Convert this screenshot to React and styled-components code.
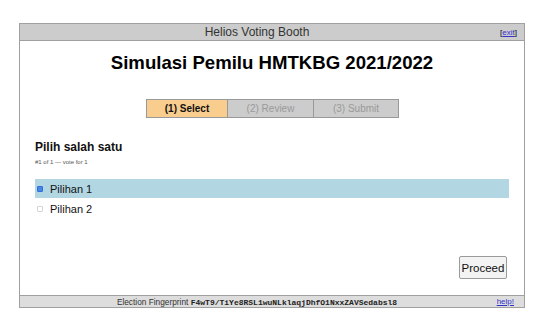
import React from "react";
import styled, { createGlobalStyle } from "styled-components";

const Global = createGlobalStyle`
  html, body { margin: 0; padding: 0; background: #fff; }
  body { font-family: "Liberation Sans", Arial, sans-serif; color: #000; }
`;

const Page = styled.div`
  padding: 23px 0 0 19px;
`;

const Booth = styled.div`
  width: 504px;
  border: 1px solid #a0a0a0;
  display: flex;
  flex-direction: column;
`;

const Bar = styled.div`
  display: flex;
  align-items: center;
  height: ${(p) => p.$h}px;
  background: ${(p) => p.$bg};
  border-${(p) => p.$side}: 1px solid #a0a0a0;
`;

const BarTitle = styled.div`
  flex: 1;
  text-align: center;
  font-size: ${(p) => p.$size}px;
  color: #333;
  white-space: nowrap;
`;

const BarLinkCell = styled.div`
  width: 30px;
  text-align: right;
  padding-right: ${(p) => p.$pr}px;
  box-sizing: border-box;
  font-size: 8px;
  white-space: nowrap;
`;

const Link = styled.a`
  color: #3333cc;
  text-decoration: underline;
`;

const Mono = styled.span`
  font-family: "Liberation Mono", "Courier New", monospace;
  font-weight: bold;
  font-size: 8px;
  color: #222;
`;

const Body = styled.div`
  height: 254px;
  padding: 0 15px;
  display: flex;
  flex-direction: column;
`;

const Title = styled.h1`
  margin: 10px 0 0;
  font-size: 18.6px;
  line-height: 24px;
  font-weight: bold;
  text-align: center;
`;

const Steps = styled.div`
  display: flex;
  align-self: flex-start;
  margin: 24px 0 0 111px;
  border: 1px solid #999;
`;

const Step = styled.div`
  width: ${(p) => p.$w}px;
  height: 17px;
  line-height: 17px;
  text-align: center;
  font-size: 10px;
  background: ${(p) => (p.$active ? "#f9cd8e" : "#cccccc")};
  color: ${(p) => (p.$active ? "#111" : "#9a9a9a")};
  font-weight: ${(p) => (p.$active ? "bold" : "normal")};
  & + & { border-left: 1px solid #999; }
`;

const Question = styled.h3`
  margin: 22px 0 0;
  font-size: 12px;
  line-height: 14px;
  font-weight: bold;
  color: #111;
`;

const Sub = styled.div`
  margin-top: 4px;
  font-size: 6px;
  line-height: 8px;
  color: #555;
`;

const Options = styled.div`
  margin-top: 13px;
  display: flex;
  flex-direction: column;
  gap: 1px;
`;

const Option = styled.label`
  display: flex;
  align-items: center;
  height: 19px;
  background: ${(p) => (p.$checked ? "#b2d7e3" : "transparent")};
  font-size: 11px;
  color: #111;
  padding-left: 2px;
`;

const Box = styled.span`
  width: 4px;
  height: 4px;
  border-radius: 1px;
  border: 1px solid ${(p) => (p.$checked ? "#2f6fd6" : "#d4d4d4")};
  background: ${(p) => (p.$checked ? "#4a86e8" : "#fff")};
  margin-right: 7px;
`;

const Actions = styled.div`
  margin-top: auto;
  margin-bottom: 16px;
  display: flex;
  justify-content: flex-end;
  padding-right: 2px;
`;

const Button = styled.button`
  width: 48px;
  height: 23px;
  padding: 0;
  font-family: "Liberation Sans", Arial, sans-serif;
  font-size: 11.5px;
  color: #111;
  background: #f3f3f3;
  border: 1px solid #9a9a9a;
  border-radius: 2px;
`;

export default function App() {
  return (
    <Page>
      <Global />
      <Booth>
        <Bar $h={16} $bg="#cccccc" $side="bottom">
          <BarTitle $size={12}>Helios Voting Booth</BarTitle>
          <BarLinkCell $pr={7}>
            [<Link href="#">exit</Link>]
          </BarLinkCell>
        </Bar>
        <Body>
          <Title>Simulasi Pemilu HMTKBG 2021/2022</Title>
          <Steps>
            <Step $w={80} $active>(1) Select</Step>
            <Step $w={85}>(2) Review</Step>
            <Step $w={84}>(3) Submit</Step>
          </Steps>
          <Question>Pilih salah satu</Question>
          <Sub>#1 of 1 — vote for 1</Sub>
          <Options>
            <Option $checked>
              <Box $checked />
              Pilihan 1
            </Option>
            <Option>
              <Box />
              Pilihan 2
            </Option>
          </Options>
          <Actions>
            <Button>Proceed</Button>
          </Actions>
        </Body>
        <Bar $h={11} $bg="#dddddd" $side="top">
          <BarTitle $size={8.3}>
            Election Fingerprint <Mono>F4wT9/TiYe8RSL1wuNLklaqjDhfO1NxxZAVSedabsl8</Mono>
          </BarTitle>
          <BarLinkCell $pr={10}>
            <Link href="#">help!</Link>
          </BarLinkCell>
        </Bar>
      </Booth>
    </Page>
  );
}
